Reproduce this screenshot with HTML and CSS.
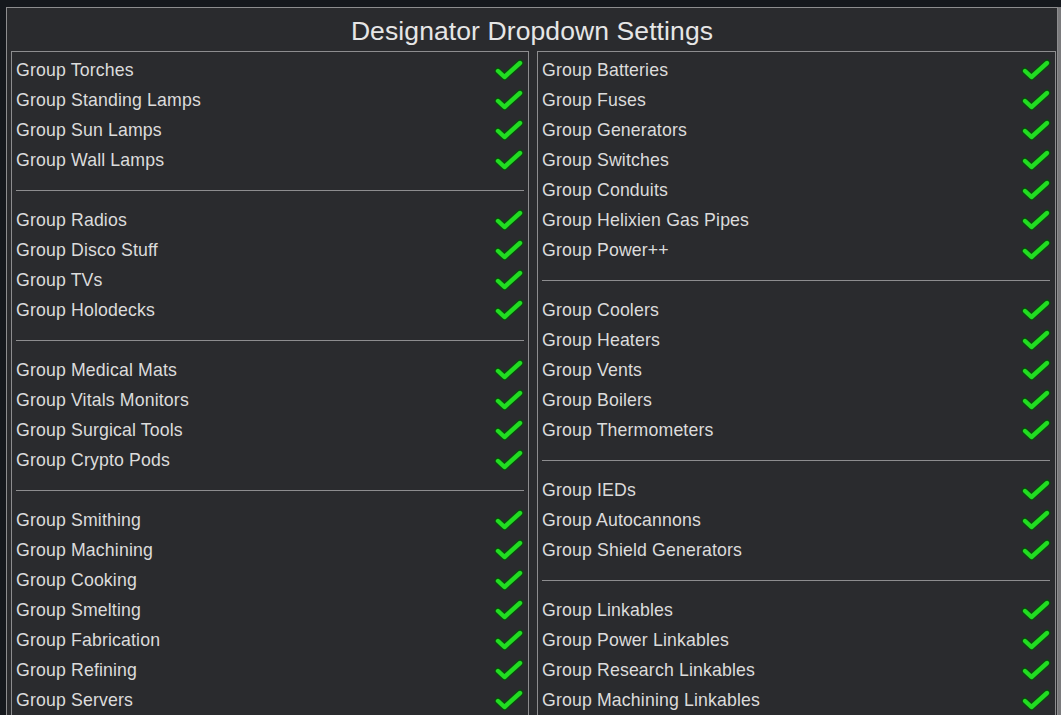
FILE: index.html
```html
<!DOCTYPE html>
<html>
<head>
<meta charset="utf-8">
<link rel="stylesheet" href="styles.css">
</head>
<body>
<svg width="0" height="0" class="defs">
  <defs>
    <symbol id="chk" viewBox="0 0 30 22">
      <path d="M4 12 L10.5 18 L26 4" fill="none" stroke="#0b4a0e" stroke-width="7" stroke-linecap="round" stroke-linejoin="round"/>
      <path d="M4 12 L10.5 18 L26 4" fill="none" stroke="#22dc22" stroke-width="4.4" stroke-linecap="round" stroke-linejoin="round"/>
    </symbol>
  </defs>
</svg>
<div class="window">
  <div class="title">Designator Dropdown Settings</div>
  <div class="columns">
    <div class="col" id="left"></div>
    <div class="col" id="right"></div>
  </div>
</div>
<div class="scroll"></div>
<script src="app.js"></script>
</body>
</html>
```
FILE: app.js
```js
const left = [
  ["Torches","Standing Lamps","Sun Lamps","Wall Lamps"],
  ["Radios","Disco Stuff","TVs","Holodecks"],
  ["Medical Mats","Vitals Monitors","Surgical Tools","Crypto Pods"],
  ["Smithing","Machining","Cooking","Smelting","Fabrication","Refining","Servers"]
];
const right = [
  ["Batteries","Fuses","Generators","Switches","Conduits","Helixien Gas Pipes","Power++"],
  ["Coolers","Heaters","Vents","Boilers","Thermometers"],
  ["IEDs","Autocannons","Shield Generators"],
  ["Linkables","Power Linkables","Research Linkables","Machining Linkables"]
];
function fill(el, groups) {
  groups.forEach((g, gi) => {
    if (gi > 0) {
      const s = document.createElement("div");
      s.className = "sep";
      el.appendChild(s);
    }
    g.forEach(name => {
      const r = document.createElement("div");
      r.className = "row";
      r.innerHTML = '<span class="label">Group ' + name + '</span>' +
        '<svg class="check" viewBox="0 0 30 22"><use href="#chk"/></svg>';
      el.appendChild(r);
    });
  });
}
fill(document.getElementById("left"), left);
fill(document.getElementById("right"), right);
```
FILE: styles.css
```css
html, body {
  margin: 0;
  padding: 0;
  background: #15181d;
  width: 1061px;
  height: 715px;
  overflow: hidden;
  font-family: "Liberation Sans", Arial, sans-serif;
  position: relative;
}
.defs { position: absolute; }
.window {
  margin: 7px 0 0 6px;
  width: 1050px;
  height: 707px;
  border: 1px solid #8d8d8f;
  border-bottom: none;
  background: #2a2b2e;
  overflow: hidden;
}
.title {
  height: 43px;
  line-height: 46px;
  text-align: center;
  color: #e6e6e6;
  font-size: 26.5px;
  letter-spacing: 0.1px;
}
.columns {
  display: grid;
  grid-template-columns: 518px 519px;
  gap: 8px;
  padding-left: 4px;
}
.col {
  border: 1px solid #8d8d8f;
  padding: 3px 4px 0 4px;
  height: 700px;
}
.row {
  height: 30px;
  display: flex;
  align-items: center;
  justify-content: space-between;
}
.label {
  color: #dcdcdc;
  font-size: 17.7px;
  letter-spacing: 0.15px;
  padding-top: 1px;
}
.check {
  width: 30px;
  height: 22px;
  margin-right: 0;
  margin-top: -1px;
}
.sep {
  height: 30px;
  display: flex;
  align-items: center;
}
.sep::before {
  content: "";
  display: block;
  width: 508px;
  height: 1px;
  background: #8d8d8f;
}
.scroll {
  position: absolute;
  right: 0;
  top: 7px;
  width: 3px;
  height: 708px;
  background: #7a7a7c;
}
```
